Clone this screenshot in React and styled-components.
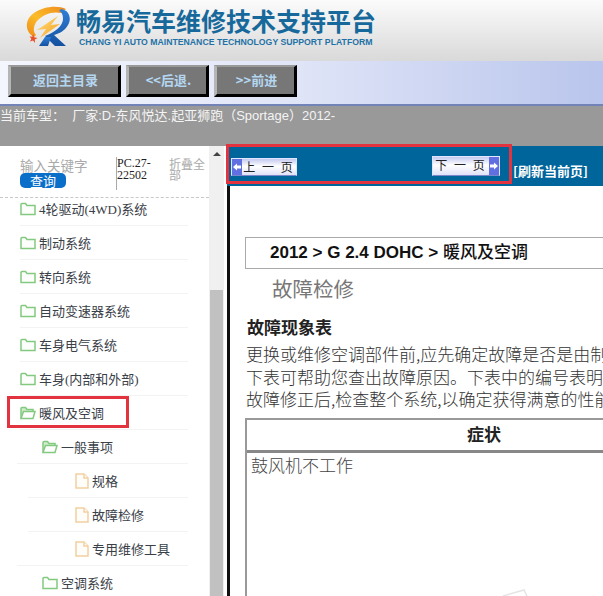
import styled, { createGlobalStyle } from "styled-components";

const GlobalStyle = createGlobalStyle`
  html, body {
    margin: 0;
    padding: 0;
    background: #fff;
    overflow: hidden;
  }
  body {
    font-family: "Liberation Sans", "Noto Sans CJK SC", sans-serif;
  }
`;

const Page = styled.div`
  position: relative;
  width: 603px;
  height: 596px;
  overflow: hidden;
  display: flex;
  flex-direction: column;
`;

const Header = styled.div`
  height: 61px;
  flex: none;
  display: flex;
  align-items: flex-start;
  padding: 6px 0 0 25px;
  box-sizing: border-box;
  background: linear-gradient(#fbfbfb, #d9d9d9);
`;

const BrandText = styled.div`
  margin-left: 5px;
  display: flex;
  flex-direction: column;
`;

const BrandTitle = styled.div`
  margin-top: -2px;
  font: 700 25px/32px "Noto Sans CJK SC", sans-serif;
  color: #17699b;
  white-space: nowrap;
`;

const BrandSub = styled.div`
  margin: 1px 0 0 3px;
  font: 700 8.7px/11px "Liberation Sans", sans-serif;
  color: #1f72a6;
  white-space: nowrap;
`;

const NavBar = styled.div`
  height: 45px;
  flex: none;
  box-sizing: border-box;
  display: flex;
  align-items: flex-start;
  gap: 5px;
  padding: 4px 0 0 8px;
  border-bottom: 2px solid #7283b8;
  background: linear-gradient(90deg, #f4f6fe 0%, #dfe4f7 50%, #b9c5ec 100%);
`;

const NavButton = styled.div`
  width: ${(p) => p.$w}px;
  height: 32px;
  box-sizing: border-box;
  display: flex;
  align-items: center;
  justify-content: center;
  padding: 0 0 2px 2px;
  background: #777;
  border-style: solid;
  border-width: 2px 3px 3px 3px;
  border-color: #999 #000 #000 #b5b5b5;
  color: #b4d6f0;
  font: 700 13px/18px "Noto Sans CJK SC", sans-serif;
`;

const CarBar = styled.div`
  height: 40px;
  flex: none;
  box-sizing: border-box;
  padding-top: 1px;
  background: #999;
  color: #f4f4f4;
  font: 13px/17px "Liberation Sans", "Noto Sans CJK SC", sans-serif;
  white-space: pre;
`;

const Main = styled.div`
  flex: 1;
  min-height: 0;
  display: flex;
`;

const Sidebar = styled.div`
  width: 209px;
  flex: none;
  overflow: hidden;
  background: #fff;
`;

const SearchBox = styled.div`
  position: relative;
  z-index: 1;
  height: 52px;
  box-sizing: border-box;
  display: flex;
  border-bottom: 1px dashed #c8c8c8;
  padding: 9px 0 0 20px;
`;

const SearchLeft = styled.div`
  width: 96px;
  flex: none;
  padding-top: 3px;
`;

const SearchHint = styled.div`
  height: 15px;
  font: 13.5px/14px "Noto Sans CJK SC", sans-serif;
  color: #aaa;
`;

const SearchButton = styled.div`
  width: 46px;
  height: 15px;
  border-radius: 5px;
  background: #0a6fc9;
  color: #fff;
  text-align: center;
  font: 13px/15px "Noto Sans CJK SC", sans-serif;
`;

const KeyCode = styled.div`
  width: 52px;
  flex: none;
  height: 33px;
  margin-top: 2px;
  border-left: 1px solid #aaa;
  font: 12px/12px "Liberation Serif", serif;
  color: #222;
`;

const Collapse = styled.div`
  width: 38px;
  padding-top: 3px;
  font: 12px/11px "Noto Sans CJK SC", sans-serif;
  color: #aaa;
`;

const TreeList = styled.div`
  margin-top: -6px;
`;

const TreeRow = styled.div`
  position: relative;
  height: 34px;
  box-sizing: border-box;
  margin-left: ${(p) => p.$lineFrom}px;
  width: ${(p) => 188 - p.$lineFrom}px;
  padding-left: ${(p) => p.$iconAt - p.$lineFrom}px;
  border-bottom: 1px solid #f3f3f3;
  display: flex;
  align-items: center;
  gap: 3px;
  font: 13px "Liberation Serif", "Noto Sans CJK SC", serif;
  color: #3a4048;
  white-space: nowrap;
`;

const RowHighlight = styled.div`
  position: absolute;
  left: -13px;
  top: 0;
  width: 122px;
  height: 32px;
  box-sizing: border-box;
  border: 3px solid #e2333f;
`;

const Scrollbar = styled.div`
  width: 15px;
  flex: none;
  background: #f0f0f0;
  display: flex;
  flex-direction: column;
  align-items: center;
`;

const ScrollArrow = styled.div`
  margin-top: 6px;
  width: 0;
  height: 0;
  border-left: 4px solid transparent;
  border-right: 4px solid transparent;
  border-bottom: 4px solid #444;
`;

const ScrollThumb = styled.div`
  margin-top: 134px;
  width: 13px;
  flex: 1;
  background: #c1c1c1;
`;

const Content = styled.div`
  flex: 1;
  min-width: 0;
  margin-left: 2px;
  display: flex;
  flex-direction: column;
`;

const PagerBar = styled.div`
  position: relative;
  height: 40px;
  flex: none;
  background: #00659b;
  margin-left: 1px;
`;

const PagerHighlight = styled.div`
  position: absolute;
  left: -1px;
  top: -2px;
  width: 286px;
  height: 40px;
  box-sizing: border-box;
  border: 3px solid #e2333f;
  display: flex;
  justify-content: space-between;
  align-items: flex-start;
  padding: 9px 9px 0 2px;
`;

const PageButton = styled.div`
  width: ${(p) => p.$w}px;
  height: ${(p) => p.$h}px;
  margin-top: ${(p) => p.$top}px;
  box-sizing: border-box;
  display: flex;
  flex-direction: ${(p) => (p.$next ? "row-reverse" : "row")};
  align-items: stretch;
  background: linear-gradient(#c4caf0, #ffffff 45%, #dfe2f8);
  border: 1px solid #dfe4ff;
  border-bottom-color: #7a86c8;
  font: 12px "Noto Sans CJK SC", sans-serif;
  color: #222;
`;

const PageArrow = styled.div`
  width: 10px;
  flex: none;
  background: #6070e0;
  display: flex;
  align-items: center;
  justify-content: center;
`;

const PageLabel = styled.div`
  flex: 1;
  text-align: center;
  line-height: 16px;
  letter-spacing: 2px;
  white-space: pre;
`;

const Refresh = styled.div`
  position: absolute;
  left: 286px;
  top: 16px;
  font: 700 13px/18px "Noto Sans CJK SC", sans-serif;
  color: #fff;
  white-space: nowrap;
`;

const Article = styled.div`
  flex: 1;
  min-height: 0;
  border-left: 3px solid #111;
  margin-left: 1px;
  padding: 51px 0 0 15px;
  overflow: hidden;
`;

const Breadcrumb = styled.div`
  width: 420px;
  height: 32px;
  box-sizing: border-box;
  border: 1px solid #aaa;
  padding-left: 24px;
  font: 700 17px/29px "Liberation Sans", "Noto Sans CJK SC", sans-serif;
  color: #111;
  white-space: nowrap;
`;

const BreadcrumbTail = styled.span`
  font-weight: 500;
`;

const PageTitle = styled.div`
  margin: 4px 0 0 27px;
  font: 20.5px/30px "Noto Sans CJK SC", sans-serif;
  color: #777;
`;

const SectionTitle = styled.div`
  margin: 12px 0 0 2px;
  font: 700 17px/24px "Noto Sans CJK SC", sans-serif;
  color: #222;
`;

const Paragraph = styled.div`
  margin: 4px 0 0 1px;
  width: 358px;
  overflow: hidden;
  font: 300 17px/22.5px "Noto Sans CJK SC", sans-serif;
  color: #333;
  white-space: nowrap;
`;

const SymptomTable = styled.div`
  margin-top: 7px;
  width: 474px;
  border-top: 2px solid #999;
  border-left: 2px solid #999;
`;

const SymptomHead = styled.div`
  height: 30px;
  border-bottom: 3px solid #888;
  text-align: center;
  font: 700 17px/28px "Noto Sans CJK SC", sans-serif;
  color: #222;
`;

const SymptomCell = styled.div`
  padding: 0 0 0 4px;
  height: 200px;
  font: 300 17px/24px "Noto Sans CJK SC", sans-serif;
  color: #444;
`;

const Watermark = styled.svg`
  position: absolute;
  left: 502px;
  bottom: 0;
`;

const FolderIcon = ({ open }) => (
  <svg width="16" height="14" viewBox="0 0 16 14" fill="none" stroke="#84c980" strokeWidth="1.5" style={{ flex: "none" }}>
    {open ? (
      <>
        <path d="M1 12V2.5C1 1.8 1.4 1.5 2 1.5H5.5L7 3.5H13V5.5" fill="#cfeccb" />
        <path d="M1 12.5L3.5 5.5H15L13 12.5Z" fill="#fff" />
      </>
    ) : (
      <path d="M1 12.5V2.5C1 1.8 1.4 1.5 2 1.5H5.5L7 3.5H15V12.5Z" fill="#fbfefa" />
    )}
  </svg>
);

const FileIcon = () => (
  <svg width="14" height="16" viewBox="0 0 14 16" fill="#fffdf9" stroke="#f2cfa0" strokeWidth="1.5" style={{ flex: "none" }}>
    <path d="M1 1H9L13 5V15H1Z" />
    <path d="M9 1V5H13" />
  </svg>
);

const ArrowIcon = ({ next }) => (
  <svg width="8" height="8" viewBox="0 0 8 8" fill="#fff">
    <path d={next ? "M0 2.5H4V0.5L8 4L4 7.5V5.5H0Z" : "M8 2.5H4V0.5L0 4L4 7.5V5.5H8Z"} />
  </svg>
);

const Logo = () => (
  <svg width="46" height="42" viewBox="0 0 46 42" style={{ flex: "none" }}>
    <defs>
      <linearGradient id="ring" x1="0" y1="1" x2="1" y2="0">
        <stop offset="0" stopColor="#ee8a18" />
        <stop offset="0.45" stopColor="#fbbc28" />
        <stop offset="1" stopColor="#ee8a1c" />
      </linearGradient>
      <linearGradient id="bolt" x1="0" y1="0" x2="1" y2="1">
        <stop offset="0" stopColor="#ffe680" />
        <stop offset="1" stopColor="#f59a1e" />
      </linearGradient>
      <linearGradient id="leg" x1="0" y1="0" x2="0" y2="1">
        <stop offset="0" stopColor="#2f7fd8" />
        <stop offset="1" stopColor="#14509f" />
      </linearGradient>
    </defs>
    <path d="M9 31C0 26 -1 14 9 7C19 0 33 -1 41 3L36 7C28 5 18 8 12 15C8 20 8 26 11 29Z" fill="url(#ring)" />
    <path d="M36 3C44 4 47 12 43 19C40 25 33 28 29 29L41 40H30L20 30C30 26 38 20 38 13C38 9 37 6 34 5Z" fill="url(#leg)" />
    <path d="M14 40L20 31H26L23 40Z" fill="url(#leg)" />
    <path d="M33 10L12 24L21 23L15 32L35 18L26 19Z" fill="url(#bolt)" />
    <path d="M8 28L9.2 31.2L12.5 32L9.8 33.6L10 37L8 34.6L5 35.6L6.4 32.8L4.5 30.4L7.4 30.8Z" fill="#e8502a" />
  </svg>
);

const treeItems = [
  { name: "4轮驱动(4WD)系统", icon: "folder", iconAt: 20, lineFrom: 20 },
  { name: "制动系统", icon: "folder", iconAt: 20, lineFrom: 20 },
  { name: "转向系统", icon: "folder", iconAt: 20, lineFrom: 20 },
  { name: "自动变速器系统", icon: "folder", iconAt: 20, lineFrom: 20 },
  { name: "车身电气系统", icon: "folder", iconAt: 20, lineFrom: 20 },
  { name: "车身(内部和外部)", icon: "folder", iconAt: 20, lineFrom: 20 },
  { name: "暖风及空调", icon: "open", iconAt: 20, lineFrom: 20, marked: true },
  { name: "一般事项", icon: "open", iconAt: 42, lineFrom: 17 },
  { name: "规格", icon: "file", iconAt: 75, lineFrom: 28 },
  { name: "故障检修", icon: "file", iconAt: 75, lineFrom: 28 },
  { name: "专用维修工具", icon: "file", iconAt: 75, lineFrom: 17 },
  { name: "空调系统", icon: "folder", iconAt: 42, lineFrom: 17 },
];

const App = () => {
  return (
    <Page>
      <GlobalStyle />
      <Header>
        <Logo />
        <BrandText>
          <BrandTitle>畅易汽车维修技术支持平台</BrandTitle>
          <BrandSub>CHANG YI AUTO MAINTENANCE TECHNOLOGY SUPPORT PLATFORM</BrandSub>
        </BrandText>
      </Header>
      <NavBar>
        <NavButton $w={113}>返回主目录</NavButton>
        <NavButton $w={83}>&lt;&lt;后退.</NavButton>
        <NavButton $w={83}>&gt;&gt;前进</NavButton>
      </NavBar>
      <CarBar>当前车型：  厂家:D-东风悦达.起亚狮跑（Sportage）2012-</CarBar>
      <Main>
        <Sidebar>
          <SearchBox>
            <SearchLeft>
              <SearchHint>输入关键字</SearchHint>
              <SearchButton>查询</SearchButton>
            </SearchLeft>
            <KeyCode>PC.27-22502</KeyCode>
            <Collapse>折叠全部</Collapse>
          </SearchBox>
          <TreeList>
            {treeItems.map((item) => (
              <TreeRow key={item.name} $iconAt={item.iconAt} $lineFrom={item.lineFrom}>
                {item.marked && <RowHighlight />}
                {item.icon === "file" ? <FileIcon /> : <FolderIcon open={item.icon === "open"} />}
                {item.name}
              </TreeRow>
            ))}
          </TreeList>
        </Sidebar>
        <Scrollbar>
          <ScrollArrow />
          <ScrollThumb />
        </Scrollbar>
        <Content>
          <PagerBar>
            <PagerHighlight>
              <PageButton $w={66} $h={18} $top={2}>
                <PageArrow>
                  <ArrowIcon />
                </PageArrow>
                <PageLabel>上 一 页</PageLabel>
              </PageButton>
              <PageButton $w={68} $h={20} $top={0} $next>
                <PageArrow>
                  <ArrowIcon next />
                </PageArrow>
                <PageLabel>下 一 页</PageLabel>
              </PageButton>
            </PagerHighlight>
            <Refresh>[刷新当前页]</Refresh>
          </PagerBar>
          <Article>
            <Breadcrumb>
              2012 &gt; G 2.4 DOHC &gt; <BreadcrumbTail>暖风及空调</BreadcrumbTail>
            </Breadcrumb>
            <PageTitle>故障检修</PageTitle>
            <SectionTitle>故障现象表</SectionTitle>
            <Paragraph>
              更换或维修空调部件前,应先确定故障是否是由制
              <br />
              下表可帮助您查出故障原因。下表中的编号表明
              <br />
              故障修正后,检查整个系统,以确定获得满意的性能
            </Paragraph>
            <SymptomTable>
              <SymptomHead>症状</SymptomHead>
              <SymptomCell>鼓风机不工作</SymptomCell>
            </SymptomTable>
          </Article>
        </Content>
      </Main>
      <Watermark width="26" height="11" viewBox="0 0 26 11" fill="none" stroke="#e4e4e4" strokeWidth="1.5">
        <path d="M1 11L22 5L25 11" />
      </Watermark>
    </Page>
  );
};

export default App;
